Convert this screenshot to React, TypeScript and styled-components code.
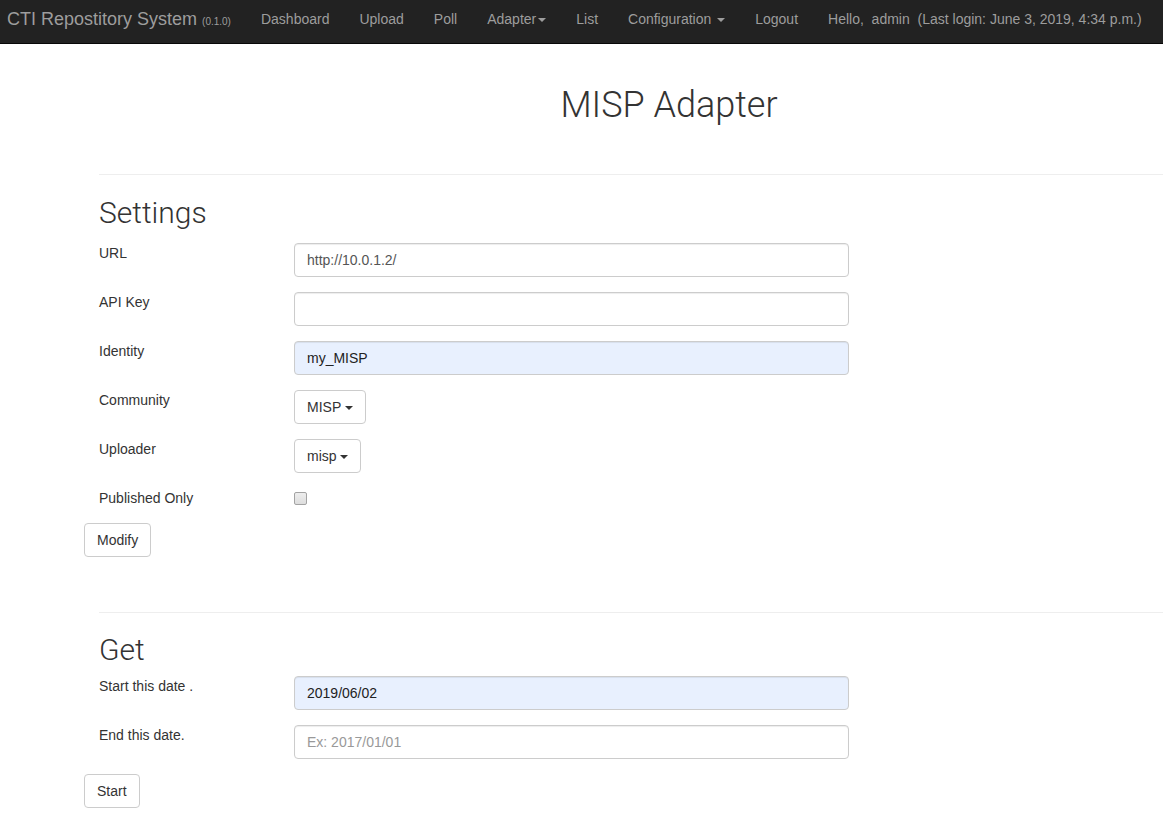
import React from "react";
import styled, { createGlobalStyle } from "styled-components";

const GlobalStyle = createGlobalStyle`
  html, body { margin: 0; padding: 0; background: #fff; }
  body {
    font-family: "Liberation Sans", Arial, Helvetica, sans-serif;
    font-size: 14px;
    line-height: 20px;
    color: #333;
    overflow-x: hidden;
  }
  * { box-sizing: border-box; }
`;

const Page = styled.div`
  width: 1163px;
  overflow: hidden;
`;

const Navbar = styled.nav`
  display: flex;
  align-items: flex-start;
  height: 44px;
  background: #222;
  border-bottom: 1px solid #080808;
  white-space: nowrap;
`;

const Brand = styled.span`
  padding: 9px 15px 0 7px;
  font-size: 18px;
  line-height: 20px;
  color: #9d9d9d;
`;

const Version = styled.small`
  font-size: 10px;
  margin-left: 5px;
  color: #9d9d9d;
`;

const NavLink = styled.span`
  padding: 9px 15px 0;
  font-size: 14px;
  line-height: 20px;
  color: #9d9d9d;
  white-space: pre;
`;

const Caret = styled.span<{ $gap?: number }>`
  display: inline-block;
  width: 0;
  height: 0;
  margin-left: ${(p) => p.$gap ?? 2}px;
  vertical-align: middle;
  border-top: 4px solid;
  border-left: 4px solid transparent;
  border-right: 4px solid transparent;
`;

const Container = styled.main`
  width: 1170px;
  margin-left: 84px;
  padding: 0 15px;
`;

const Title = styled.h1`
  margin: 41px 0 0;
  font-family: Roboto, "Liberation Sans", sans-serif;
  font-weight: 300;
  font-size: 36px;
  line-height: 40px;
  color: #333;
  text-align: center;
`;

const Rule = styled.hr<{ $top: number }>`
  margin: ${(p) => p.$top}px 0 0;
  border: 0;
  border-top: 1px solid #eee;
  height: 0;
`;

const SectionTitle = styled.h2<{ $top?: number }>`
  margin: ${(p) => p.$top ?? 21}px 0 10px;
  font-family: Roboto, "Liberation Sans", sans-serif;
  font-weight: 300;
  font-size: 30px;
  line-height: 33px;
  color: #333;
`;

const Form = styled.form<{ $pad?: number }>`
  margin: 0;
  padding-top: ${(p) => p.$pad ?? 0}px;
`;

const Row = styled.div<{ $h?: number }>`
  display: grid;
  grid-template-columns: 195px 555px;
  height: ${(p) => p.$h ?? 34}px;
  margin-bottom: 15px;
`;

const Label = styled.label`
  font-size: 14px;
  line-height: 20px;
  color: #333;
`;

const Input = styled.input<{ $filled?: boolean }>`
  display: block;
  width: 555px;
  height: 34px;
  padding: 6px 12px;
  font-family: "Liberation Sans", Arial, sans-serif;
  font-size: 14px;
  line-height: 20px;
  color: ${(p) => (p.$filled ? "#222" : "#555")};
  background: ${(p) => (p.$filled ? "#e8f0fe" : "#fff")};
  border: 1px solid #ccc;
  border-radius: 4px;
  box-shadow: inset 0 1px 1px rgba(0, 0, 0, 0.075);
  outline: none;
  &::placeholder { color: #999; }
`;

const Button = styled.button<{ $outdent?: boolean }>`
  display: inline-block;
  justify-self: start;
  height: 34px;
  padding: 6px 12px;
  margin-left: ${(p) => (p.$outdent ? "-15px" : "0")};
  font-family: "Liberation Sans", Arial, sans-serif;
  font-size: 14px;
  line-height: 20px;
  color: #333;
  background: #fff;
  border: 1px solid #ccc;
  border-radius: 4px;
  white-space: nowrap;
  cursor: pointer;
`;

const Check = styled.input`
  appearance: none;
  display: block;
  width: 13px;
  height: 13px;
  margin: 4px 0 0;
  border: 1px solid #a3a3a3;
  border-radius: 2px;
  background: linear-gradient(#eeeeee, #dddddd);
`;

const Field = ({ label, children, h }: { label: string; children: React.ReactNode; h?: number }) => (
  <Row $h={h}>
    <Label>{label}</Label>
    <div>{children}</div>
  </Row>
);

export default function App() {
  return (
    <Page>
      <GlobalStyle />
      <Navbar>
        <Brand>
          CTI Repostitory System<Version>(0.1.0)</Version>
        </Brand>
        <NavLink>Dashboard</NavLink>
        <NavLink>Upload</NavLink>
        <NavLink>Poll</NavLink>
        <NavLink>
          Adapter<Caret $gap={2} />
        </NavLink>
        <NavLink>List</NavLink>
        <NavLink>
          Configuration <Caret />
        </NavLink>
        <NavLink>Logout</NavLink>
        <NavLink>{"Hello,  admin  (Last login: June 3, 2019, 4:34 p.m.)"}</NavLink>
      </Navbar>

      <Container>
        <Title>MISP Adapter</Title>
        <Rule $top={49} />
        <SectionTitle>Settings</SectionTitle>
        <Form $pad={4}>
          <Field label="URL">
            <Input defaultValue="http://10.0.1.2/" />
          </Field>
          <Field label="API Key">
            <Input defaultValue="" />
          </Field>
          <Field label="Identity">
            <Input $filled defaultValue="my_MISP" />
          </Field>
          <Field label="Community">
            <Button type="button">
              MISP <Caret $gap={0} />
            </Button>
          </Field>
          <Field label="Uploader">
            <Button type="button">
              misp <Caret $gap={0} />
            </Button>
          </Field>
          <Field label="Published Only" h={20}>
            <Check type="checkbox" />
          </Field>
          <Button type="button" $outdent>
            Modify
          </Button>
        </Form>

        <Rule $top={55} />
        <SectionTitle $top={20}>Get</SectionTitle>
        <Form>
          <Field label="Start this date .">
            <Input $filled defaultValue="2019/06/02" />
          </Field>
          <Field label="End this date.">
            <Input placeholder="Ex: 2017/01/01" />
          </Field>
          <Button type="button" $outdent>
            Start
          </Button>
        </Form>
      </Container>
    </Page>
  );
}
